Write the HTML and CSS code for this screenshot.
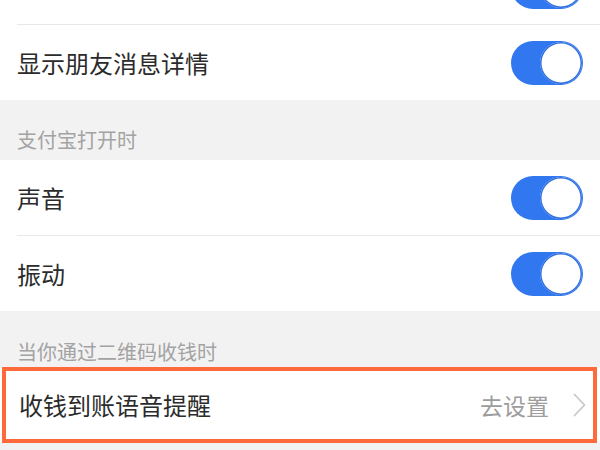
FILE: index.html
```html
<!doctype html>
<html lang="zh-CN">
<head>
	<meta charset="UTF-8" />
	<title>新消息通知</title>
	<link rel="stylesheet" href="styles.css">
</head>
<body>
	<section class="group group-first">
		<div class="row">
			<div class="row-in">
				<span class="label">接收新消息通知</span>
				<span class="switch"><i class="knob"></i></span>
			</div>
		</div>
		<div class="row">
			<div class="row-in last">
				<span class="label">显示朋友消息详情</span>
				<span class="switch"><i class="knob"></i></span>
			</div>
		</div>
	</section>

	<h3 class="group-title">支付宝打开时</h3>
	<section class="group">
		<div class="row">
			<div class="row-in">
				<span class="label">声音</span>
				<span class="switch"><i class="knob"></i></span>
			</div>
		</div>
		<div class="row">
			<div class="row-in last">
				<span class="label">振动</span>
				<span class="switch"><i class="knob"></i></span>
			</div>
		</div>
	</section>

	<h3 class="group-title title-2">当你通过二维码收钱时</h3>
	<section class="group">
		<div class="row row-mark">
			<div class="row-in last">
				<span class="label">收钱到账语音提醒</span>
				<span class="extra">去设置</span>
				<svg class="arrow" width="13" height="24" viewBox="0 0 13 24">
					<path d="M1.5 1.5 L11.5 12 L1.5 22.5" fill="none" stroke="#c9c9c9" stroke-width="1.8" stroke-linecap="round" stroke-linejoin="round"/>
				</svg>
			</div>
		</div>
	</section>
</body>
</html>
```

FILE: styles.css
```css
*{
	margin: 0;
	padding: 0;
}
html,body{
	background: #f2f2f2;
	overflow: hidden;
}
body{
	width: 600px;
	height: 450px;
	font-family: "Noto Sans CJK SC", "Noto Sans", sans-serif;
	color: #2b2b2b;
}
.group{
	background: #fff;
}
.group-first{
	margin-top: -51px;
}
.row{
	padding-left: 17px;
	background: #fff;
}
.row-in{
	display: flex;
	align-items: center;
	height: 75px;
	padding-right: 17px;
	border-bottom: 1px solid #e8e8e8;
}
.row-in.last{
	border-bottom: none;
	height: 75px;
}
.label{
	flex: 1;
	font-size: 24px;
	line-height: 30px;
	color: #2b2b2b;
}
.switch{
	display: flex;
	justify-content: flex-end;
	align-items: center;
	width: 72px;
	height: 44px;
	padding: 0 1px;
	box-sizing: border-box;
	border-radius: 22px;
	background: #3177f0;
}
.knob{
	display: block;
	width: 42px;
	height: 42px;
	border-radius: 50%;
	background: #fff;
	box-shadow: inset 0 0 0 1.5px #2f6fe0, inset 0 -1px 2px rgba(0,0,0,.08);
}
.group-title{
	height: 60px;
	padding: 28px 0 0 17px;
	box-sizing: border-box;
	font-size: 20px;
	font-weight: normal;
	line-height: 24px;
	color: #a3a3a3;
}
.title-2{
	height: 56px;
	padding-top: 29px;
}
.row-mark{
	margin: 0 3px 0 2px;
	padding-left: 13px;
	border: 4px solid #ff6a3c;
}
.row-mark .row-in{
	height: 68px;
	padding-right: 7px;
}
.extra{
	font-size: 23px;
	line-height: 30px;
	color: #9d9d9d;
	margin-right: 24px;
}
.arrow{
	display: block;
}
```
